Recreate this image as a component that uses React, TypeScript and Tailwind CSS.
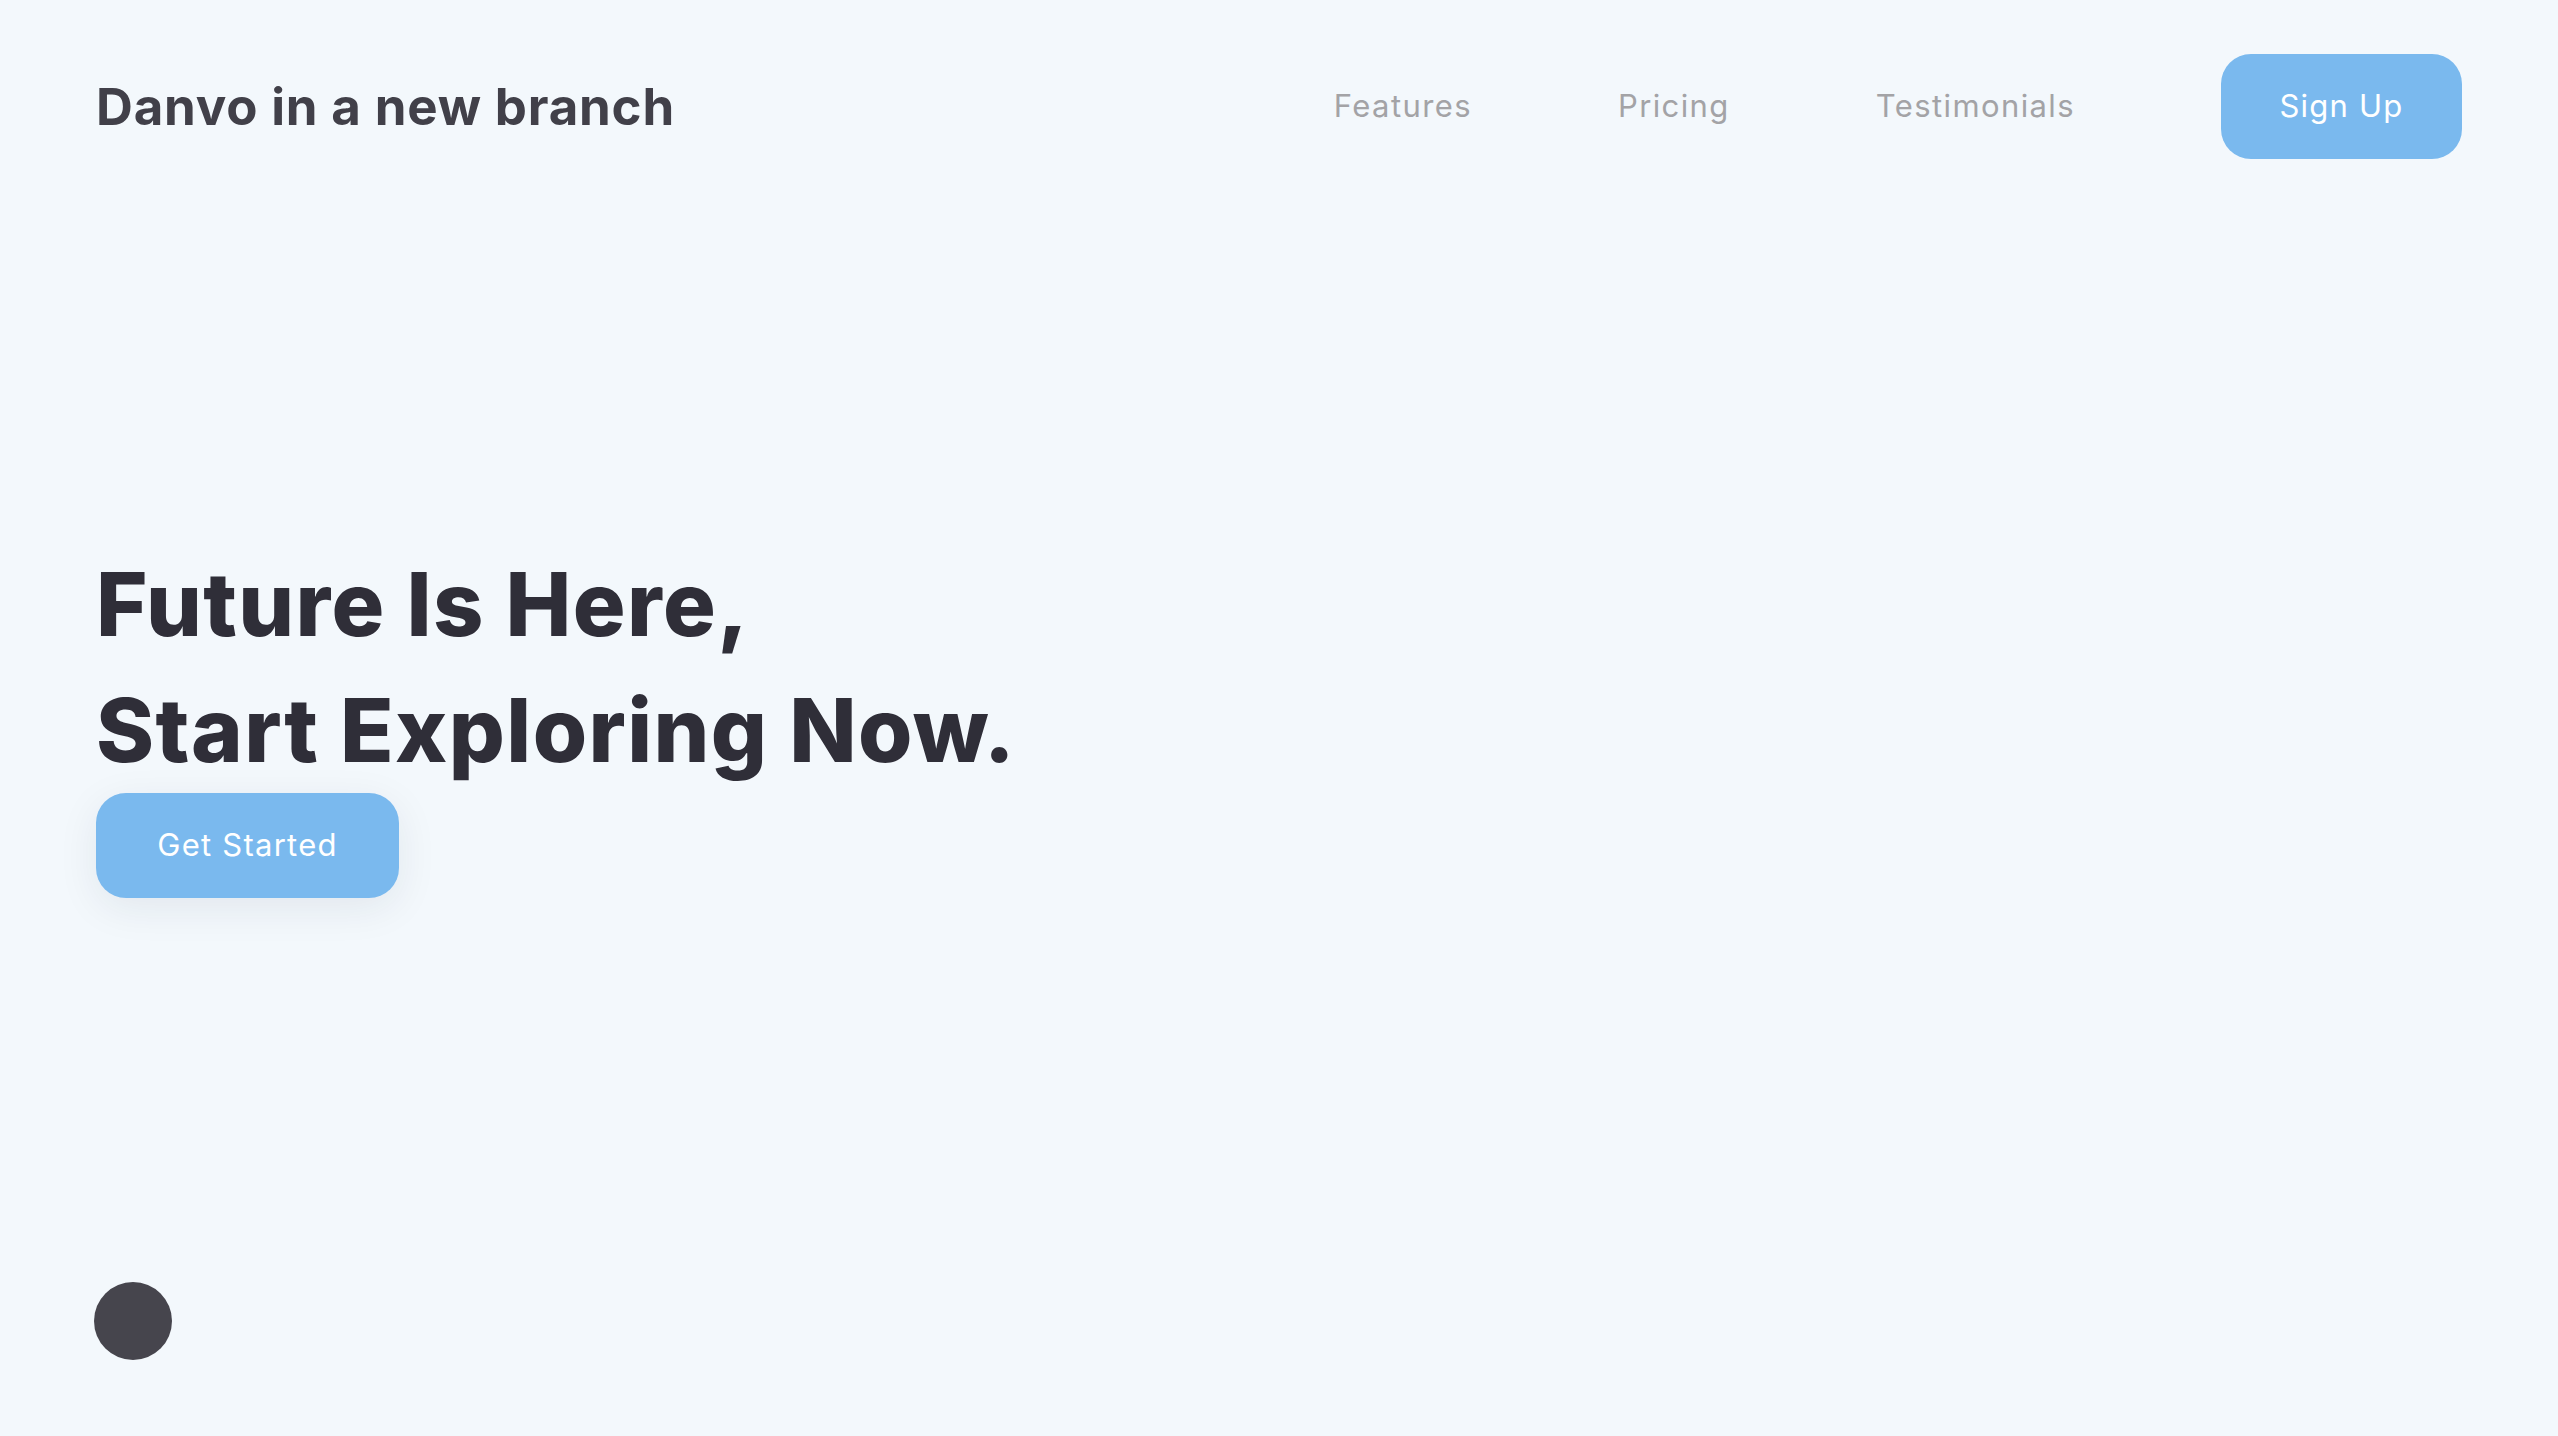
import React from "react";

const navLinks = ["Features", "Pricing", "Testimonials"];

const App = () => {
  return (
    <div className="min-h-screen w-full bg-[#f3f8fc] font-['Inter','Noto_Sans',sans-serif]">
      <header className="flex items-center justify-between px-[96px] pt-[54px]">
        <div className="text-[51px] font-bold leading-none tracking-[0.016em] text-[#414049]">Danvo in a new branch</div>
        <nav className="flex items-center">
          {navLinks.map((link) => (
            <a key={link} href="#" className="mr-[146px] text-[31px] tracking-[0.045em] text-[#a3a3a6]">
              {link}
            </a>
          ))}
          <button className="h-[105px] w-[241px] rounded-[30px] bg-[#7ab9ee] text-[31px] tracking-[0.04em] text-white">Sign Up</button>
        </nav>
      </header>

      <section className="mt-[382px] px-[96px]">
        <h1 className="text-[88px] font-extrabold leading-[126px] tracking-[0.016em] text-[#2f2e38]">
          Future Is Here,
          <br />
          Start Exploring Now.
        </h1>
        <button className="h-[105px] w-[303px] rounded-[30px] bg-[#7ab9ee] text-[31px] tracking-[0.04em] text-white shadow-[0_10px_40px_rgba(30,40,60,0.08)]">
          Get Started
        </button>
      </section>

      <div className="ml-[94px] mt-[384px] h-[78px] w-[78px] rounded-full bg-[#46454d]" />
    </div>
  );
};

export default App;
